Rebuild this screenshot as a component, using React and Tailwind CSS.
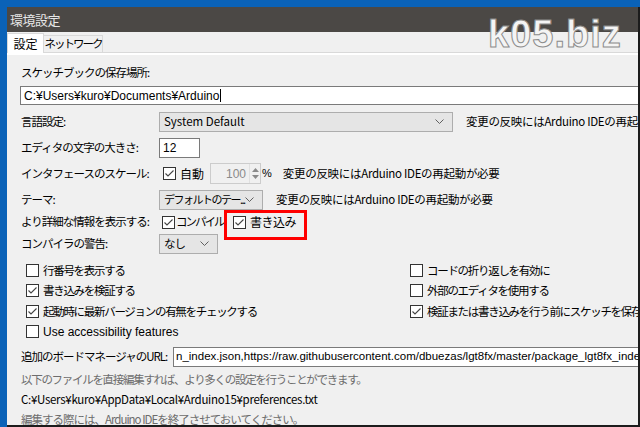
import React from 'react'

const Check = ({ checked }) => (
  <span className="w-[13px] h-[13px] border border-[#333333] bg-white flex items-center justify-center shrink-0">
    {checked && (
      <svg width="11" height="11" viewBox="0 0 11 11">
        <polyline points="1.5,5.5 4,8 9.5,2.5" fill="none" stroke="#444" strokeWidth="1.1" />
      </svg>
    )}
  </span>
)

const Chevron = () => (
  <svg width="9" height="6" viewBox="0 0 9 6" className="shrink-0">
    <polyline points="0.5,0.5 4.5,4.5 8.5,0.5" fill="none" stroke="#606060" strokeWidth="1" />
  </svg>
)

const Select = ({ value, width }) => (
  <div className={`h-[20px] border border-[#adadad] bg-[#e5e5e5] flex items-center pl-[4px] pr-[8px] ${width}`}>
    <span className="flex-1 whitespace-nowrap">{value}</span>
    <Chevron />
  </div>
)

const Label = ({ children }) => (
  <div className="w-[138px] shrink-0 whitespace-nowrap">{children}</div>
)

const Note = ({ className = '' }) => (
  <span className={`whitespace-nowrap tracking-[-0.3px] ${className}`}>変更の反映にはArduino IDEの再起動が必要</span>
)

const CheckItem = ({ checked, children }) => (
  <div className="h-[20.5px] flex items-center gap-[4px] whitespace-nowrap">
    <Check checked={checked} />
    <span className="tracking-[-1.3px]">{children}</span>
  </div>
)

export default function App() {
  return (
    <div className="w-[640px] h-[427px] overflow-hidden bg-[#0a62b8] pt-[7px] pl-[7px] relative font-['Noto_Sans_CJK_JP',sans-serif] text-[11.5px] tracking-[-1px] text-black leading-none">
      <div className="w-[633px] h-[420px] bg-[#f0f0f0] border-r-2 border-b-2 border-[#1c1c1c] overflow-hidden flex flex-col">
        {/* title bar */}
        <div className="h-[25px] shrink-0 bg-[#4b4845] flex items-center pl-[3px] text-[13px] tracking-[-0.5px] text-[#e6e6e6]">
          環境設定
        </div>

        {/* tabs */}
        <div className="h-[21px] shrink-0 flex items-end border-b border-[#d9d9d9] relative">
          <div className="h-[20px] w-[37px] bg-white border border-b-0 border-[#d9d9d9] flex items-center justify-center -mb-px text-[12px] tracking-normal">
            設定
          </div>
          <div className="h-[17px] w-[59px] whitespace-nowrap bg-[#f0f0f0] border border-l-0 border-b-0 border-[#d9d9d9] flex items-center justify-center tracking-[-2px]">
            ネットワーク
          </div>
        </div>

        {/* panel */}
        <div className="flex-1 border-t-2 border-white pl-[14px] flex flex-col w-[800px]">
          <div className="h-[20px] mt-[8px] flex items-center whitespace-nowrap">スケッチブックの保存場所:</div>
          <div className="h-[19px] mt-[3px] -ml-px w-[700px] bg-white border border-[#7a7a7a] flex items-center pl-[3px] font-['Liberation_Sans','Noto_Sans_CJK_JP',sans-serif] text-[12px] tracking-normal">
            C:¥Users¥kuro¥Documents¥Arduino<span className="w-px h-[13px] bg-black ml-px" />
          </div>

          <div className="h-[20px] mt-[7px] flex items-center">
            <Label>言語設定:</Label>
            <Select value="System Default" width="w-[294px] tracking-normal" />
            <Note className="ml-[13px]" />
          </div>

          <div className="h-[20px] mt-[6px] flex items-center">
            <Label>エディタの文字の大きさ:</Label>
            <div className="h-[20px] w-[41px] bg-white border border-[#7a7a7a] flex items-center pl-[3px] font-['Liberation_Sans',sans-serif] text-[12px] tracking-normal">12</div>
          </div>

          <div className="h-[21px] mt-[5px] flex items-center">
            <Label>インタフェースのスケール:</Label>
            <div className="ml-[4px] flex items-center gap-[4px]">
              <Check checked />
              <span className="text-[12px] tracking-normal">自動</span>
            </div>
            <div className="ml-[6px] h-[21px] w-[51px] border border-[#cccccc] bg-[#f0f0f0] flex items-center">
              <span className="flex-1 text-right pr-[3px] text-[#8a8a8a] font-['Liberation_Sans',sans-serif] text-[12px] tracking-normal">100</span>
              <div className="w-[11px] h-full flex flex-col items-center justify-center gap-[3px] border-l border-[#e0e0e0]">
                <svg width="7" height="4" viewBox="0 0 7 4"><polygon points="0,4 3.5,0 7,4" fill="#8a8a8a" /></svg>
                <svg width="7" height="4" viewBox="0 0 7 4"><polygon points="0,0 3.5,4 7,0" fill="#8a8a8a" /></svg>
              </div>
            </div>
            <span className="ml-px font-['Liberation_Sans',sans-serif] text-[11px] tracking-normal">%</span>
            <Note className="ml-[11px]" />
          </div>

          <div className="h-[19px] mt-[6px] flex items-center">
            <Label>テーマ:</Label>
            <Select value="デフォルトのテー..." width="w-[104px] text-[11px] tracking-[-1.5px] pr-[6px]" />
            <Note className="ml-[13px]" />
          </div>

          <div className="h-[20px] mt-[3px] flex items-center relative">
            <Label>より詳細な情報を表示する:</Label>
            <div className="ml-[3px] w-[71px] shrink-0 flex items-center gap-[1px]">
              <Check checked />
              <span className="tracking-[-2px]">コンパイル</span>
            </div>
            <div className="flex items-center gap-[4px]">
              <Check checked />
              <span className="text-[12px] tracking-[-0.5px]">書き込み</span>
            </div>
            <div className="absolute left-[203px] top-[-2px] w-[83px] h-[30px] border-[3px] border-[#ff0000] pointer-events-none" />
          </div>

          <div className="h-[20px] mt-[2px] flex items-center">
            <Label>コンパイラの警告:</Label>
            <Select value="なし" width="w-[59px]" />
          </div>

          <div className="mt-[6px] pl-[5px] grid grid-cols-[384px_1fr]">
            <CheckItem>行番号を表示する</CheckItem>
            <CheckItem>コードの折り返しを有効に</CheckItem>
            <CheckItem checked>書き込みを検証する</CheckItem>
            <CheckItem>外部のエディタを使用する</CheckItem>
            <CheckItem checked>起動時に最新バージョンの有無をチェックする</CheckItem>
            <CheckItem checked>検証または書き込みを行う前にスケッチを保存する</CheckItem>
            <div className="h-[20.5px] flex items-center gap-[4px] whitespace-nowrap">
              <Check />
              <span className="font-['Liberation_Sans',sans-serif] text-[12px] tracking-normal">Use accessibility features</span>
            </div>
          </div>

          <div className="h-[20px] mt-[5px] flex items-center">
            <div className="w-[152px] shrink-0 whitespace-nowrap">追加のボードマネージャのURL:</div>
            <div className="h-[20px] w-[600px] bg-white border border-[#7a7a7a] flex items-center pl-[2px] overflow-hidden whitespace-nowrap font-['Liberation_Sans',sans-serif] text-[11.5px] tracking-normal">
              n_index.json,https://raw.githubusercontent.com/dbuezas/lgt8fx/master/package_lgt8fx_index.json
            </div>
          </div>

          <div className="mt-[2px] flex flex-col">
            <div className="h-[20.5px] flex items-center whitespace-nowrap text-[#6d6d6d] tracking-[-1.3px]">以下のファイルを直接編集すれば、より多くの設定を行うことができます。</div>
            <div className="h-[20.5px] flex items-center whitespace-nowrap tracking-[-0.3px]">C:¥Users¥kuro¥AppData¥Local¥Arduino15¥preferences.txt</div>
            <div className="h-[20px] flex items-center whitespace-nowrap text-[#6d6d6d]">編集する際には、Arduino IDEを終了させておいてください。</div>
          </div>
        </div>
      </div>

      {/* watermark */}
      <div className="absolute left-[488px] top-[15px] font-['Liberation_Sans',sans-serif] font-bold text-[38px] leading-none text-[#f4f4f4] [-webkit-text-stroke:1px_#8c8c8c] tracking-[1px]">
        k05.biz
      </div>
    </div>
  )
}
